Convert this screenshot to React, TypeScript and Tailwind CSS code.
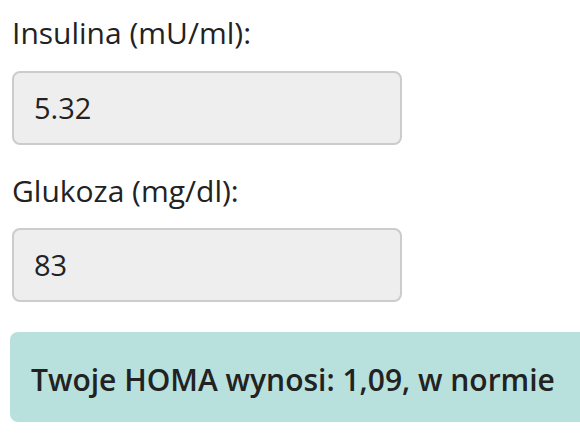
export default function App() {
  return (
    <div
      className="w-[580px] h-[434px] overflow-hidden bg-white text-[#222]"
      style={{ fontFamily: '"Open Sans", sans-serif' }}
    >
      <div className="pl-3 pt-[13px]">
        <label className="block text-[30px] leading-[40px]">Insulina (mU/ml):</label>
        <div className="mt-[18px] w-[390px] h-[74px] flex items-center px-5 bg-[#eeeeee] border-2 border-[#cccccc] rounded-lg text-[29px]">
          5.32
        </div>
        <label className="block mt-[26px] text-[30px] leading-[40px]">Glukoza (mg/dl):</label>
        <div className="mt-[17px] w-[390px] h-[74px] flex items-center px-5 bg-[#eeeeee] border-2 border-[#cccccc] rounded-lg text-[29px]">
          83
        </div>
      </div>
      <div className="ml-[10px] mt-[30px] w-[600px] h-[90px] flex items-center pl-[21px] pt-1 bg-[#b8e0dc] rounded-lg">
        <span className="text-[30px] font-semibold">Twoje HOMA wynosi: 1,09, w normie</span>
      </div>
    </div>
  );
}
